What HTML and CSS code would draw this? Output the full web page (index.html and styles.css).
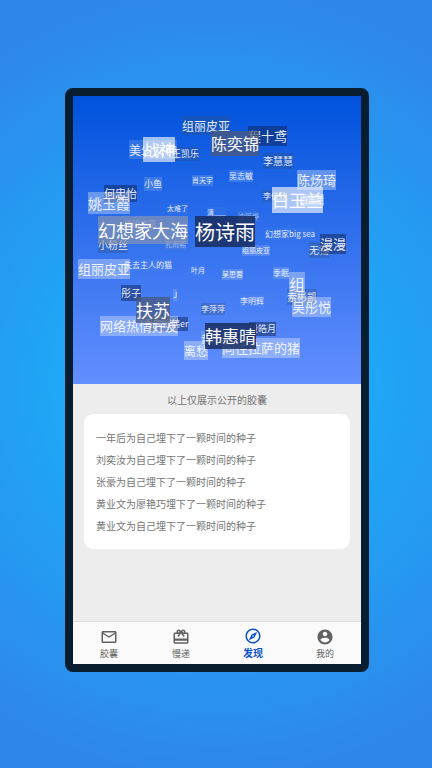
FILE: index.html
```html
<!DOCTYPE html>
<html lang="zh-CN">

<head>
  <meta charset="UTF-8">
  <meta name="viewport" content="width=device-width, initial-scale=1.0">
  <title>发现</title>
  <link rel="stylesheet" href="styles.css">
</head>

<body>

  <div class="phone">
    <ul class="cloud" id="cloud"></ul>

    <main class="content">
      <p class="tip">以上仅展示公开的胶囊</p>
      <ul class="card">
        <li>一年后为自己埋下了一颗时间的种子</li>
        <li>刘奕汝为自己埋下了一颗时间的种子</li>
        <li>张豪为自己埋下了一颗时间的种子</li>
        <li>黄业文为廖艳巧埋下了一颗时间的种子</li>
        <li>黄业文为自己埋下了一颗时间的种子</li>
      </ul>
    </main>

    <nav class="tabs">
      <a class="tab" href="#capsule">
        <svg viewBox="0 0 24 24"><path d="M22 6c0-1.100-.9-2-2-2H4c-1.100 0-2 .9-2 2v12c0 1.100.9 2 2 2h16c1.100 0 2-.9 2-2V6zm-2 0l-8 5-8-5h16zm0 12H4V8l8 5 8-5v10z"/></svg>
        <span>胶囊</span>
      </a>
      <a class="tab" href="#slow">
        <svg viewBox="0 0 24 24"><path d="M20 6h-2.180c.11-.31.18-.65.18-1 0-1.660-1.340-3-3-3-1.050 0-1.960.54-2.500 1.350l-.5.67-.5-.68C10.960 2.540 10.050 2 9 2 7.340 2 6 3.340 6 5c0 .35.07.69.18 1H4c-1.110 0-1.990.89-1.990 2L2 19c0 1.110.89 2 2 2h16c1.110 0 2-.89 2-2V8c0-1.110-.89-2-2-2zm-5-2c.55 0 1 .45 1 1s-.45 1-1 1-1-.45-1-1 .45-1 1-1zM9 4c.55 0 1 .45 1 1s-.45 1-1 1-1-.45-1-1 .45-1 1-1zm11 15H4v-2h16v2zm0-5H4V8h5.080L7 10.830 8.620 12 12 7.400 15.380 12 17 10.830 14.920 8H20v6z"/></svg>
        <span>慢递</span>
      </a>
      <a class="tab active" href="#explore">
        <svg viewBox="0 0 24 24"><path d="M12 2C6.480 2 2 6.480 2 12s4.480 10 10 10 10-4.480 10-10S17.520 2 12 2zm0 18c-4.410 0-8-3.590-8-8s3.590-8 8-8 8 3.590 8 8-3.590 8-8 8zm-5.500-2.500l7.510-3.490L17.500 6.500 9.990 9.990 6.500 17.500zm5.500-6.600c.61 0 1.100.49 1.100 1.100s-.49 1.100-1.100 1.100-1.100-.49-1.100-1.100.49-1.100 1.100-1.100z"/></svg>
        <span>发现</span>
      </a>
      <a class="tab" href="#mine">
        <svg viewBox="0 0 24 24"><path d="M12 2C6.480 2 2 6.480 2 12s4.480 10 10 10 10-4.480 10-10S17.520 2 12 2zm0 3c1.660 0 3 1.340 3 3s-1.340 3-3 3-3-1.340-3-3 1.340-3 3-3zm0 14.200c-2.500 0-4.710-1.280-6-3.220.03-1.990 4-3.080 6-3.080 1.990 0 5.970 1.090 6 3.080-1.290 1.940-3.500 3.220-6 3.220z"/></svg>
        <span>我的</span>
      </a>
    </nav>
  </div>

  <script src="cloud.js"></script>

</body>

</html>
```

FILE: styles.css
```css
* {
  box-sizing: border-box;
}

body {
  display: flex;
  min-height: 100vh;
  margin: 0;
  padding: 88px 63px 96px 65px;
  background: radial-gradient(circle, #14bcfd 0%, #2f86ea 90%);
  font-family: "Noto Sans CJK SC", sans-serif;
  color: #757575;
}

ul {
  margin: 0;
  padding: 0;
  list-style: none;
}

.phone {
  flex: 1;
  display: flex;
  flex-direction: column;
  border: 8px solid #081d2f;
  border-radius: 8px;
  background: #ededed;
}

/* name cloud */
.cloud {
  position: relative;
  aspect-ratio: 1;
  overflow: hidden;
  background: linear-gradient(#0052dc, #638fff);
  color: rgba(255, 255, 255, 0.9);
}

.name {
  position: absolute;
  white-space: nowrap;
}

.plain { background: rgba(255, 255, 255, 0.03); }
.faint { background: rgba(130, 150, 170, 0.15); color: rgba(255, 255, 255, 0.5); }
.soft { background: rgba(255, 255, 255, 0.14); }
.light { background: rgba(255, 255, 255, 0.32); }
.bright { background: rgba(255, 255, 255, 0.62); color: #fff; }
.gray { background: rgba(140, 150, 175, 0.65); color: #fff; }
.dim { background: rgba(50, 80, 130, 0.35); }
.smoke { background: rgba(75, 90, 125, 0.75); color: #fff; }
.dark { background: rgba(15, 35, 85, 0.5); }
.night { background: rgba(25, 45, 95, 0.85); color: #fff; }

/* list */
.content {
  flex: 1;
  padding: 8px 11px;
}

.tip {
  margin: 0 0 6px;
  font-size: 10px;
  line-height: 16px;
  text-align: center;
}

.card {
  padding: 13px 12px 12px;
  border-radius: 9px;
  background: #fff;
  font-size: 10px;
  line-height: 22px;
}

/* bottom tabs */
.tabs {
  display: grid;
  grid-template-columns: repeat(4, 1fr);
  height: 42px;
  background: #fafafa;
  box-shadow: 0 -1px 1px rgba(0, 0, 0, 0.06);
}

.tab {
  display: flex;
  flex-direction: column;
  align-items: center;
  padding-top: 6px;
  color: #616161;
  font-size: 9px;
  line-height: 16px;
  text-decoration: none;
}

.tab svg {
  width: 18px;
  height: 18px;
  fill: currentColor;
}

.active {
  padding-top: 5px;
  color: #0d53c8;
  font-size: 10px;
  font-weight: bold;
}
```

FILE: cloud.js
```js
// position on a 288 x 288 canvas, then font size and tone
const SIZE = 288;
const names = [
  ['孔雨熙', 92, 143, 7, 'faint'],
  ['玖天', 134, 139, 7, 'faint'],
  ['叶月', 118, 169, 7, 'plain'],
  ['太难了', 94, 107, 7, 'plain'],
  ['清___', 134, 111, 7, 'plain'],
  ['沈昕烨', 165, 115, 7, 'faint'],
  ['组丽皮亚', 169, 149, 7, 'soft'],
  ['组丽皮亚', 51, 122, 8, 'faint'],
  ['吴思蓉', 149, 173, 7, 'soft'],
  ['季眠', 200, 171, 8, 'soft'],
  ['J', 100, 193, 8, 'soft'],
  ['李萍萍', 128, 207, 8, 'dim'],
  ['李明辉', 167, 199, 8, 'plain'],
  ['肖天宇', 119, 79, 7, 'soft'],
  ['吴志敏', 156, 74, 8, 'soft'],
  ['小鱼', 71, 81, 9, 'soft'],
  ['李佳欣', 190, 94, 8, 'dim'],
  ['白玉兰', 227, 98, 8, 'light'],
  ['幻想家big sea', 192, 132, 8, 'plain'],
  ['失去主人的猫', 51, 163, 8, 'plain'],
  ['王凯乐', 99, 51, 9, 'dim'],
  ['李慧慧', 190, 57, 10, 'dim'],
  ['何忠怡', 31, 89, 11, 'dark'],
  ['小粉丝', 25, 141, 10, 'dim'],
  ['彤子', 48, 189, 10, 'dark'],
  ['索彬凯', 214, 193, 10, 'dim'],
  ['无锡', 236, 146, 10, 'dim'],
  ['段皓月', 176, 226, 9, 'dark'],
  ['青衣野鹤er', 71, 221, 9, 'dark'],
  ['黄惠惠', 128, 235, 10, 'soft'],
  ['美少女神', 56, 44, 12, 'soft'],
  ['组丽皮亚', 109, 20, 12, 'dim'],
  ['离愁', 111, 245, 12, 'light'],
  ['程十鸢', 175, 30, 13, 'dark'],
  ['陈炀琦', 224, 74, 13, 'light'],
  ['组丽皮亚', 5, 163, 13, 'light'],
  ['漫漫', 247, 138, 13, 'dark'],
  ['向往拉萨的猪', 149, 242, 13, 'light'],
  ['网络热情好友', 27, 220, 13, 'light'],
  ['姚玉霞', 15, 96, 14, 'light'],
  ['战神', 70, 41, 16, 'bright'],
  ['陈奕锦', 138, 35, 16, 'smoke'],
  ['组', 216, 176, 16, 'light'],
  ['吴彤悦', 219, 201, 13, 'light'],
  ['扶苏', 63, 201, 17, 'smoke'],
  ['白玉兰', 199, 91, 17, 'bright'],
  ['韩惠晴', 132, 227, 17, 'night'],
  ['幻想家大海', 25, 120, 18, 'gray'],
  ['杨诗雨', 122, 120, 20, 'night']
];

const cloud = document.getElementById('cloud');
names.forEach(([text, x, y, size, tone]) => {
  const item = document.createElement('li');
  item.className = 'name ' + tone;
  item.textContent = text;
  item.style.left = (x / SIZE * 100) + '%';
  item.style.top = (y / SIZE * 100) + '%';
  item.style.fontSize = size + 'px';
  item.style.lineHeight = Math.round(size * 1.55) + 'px';
  cloud.appendChild(item);
});
```
